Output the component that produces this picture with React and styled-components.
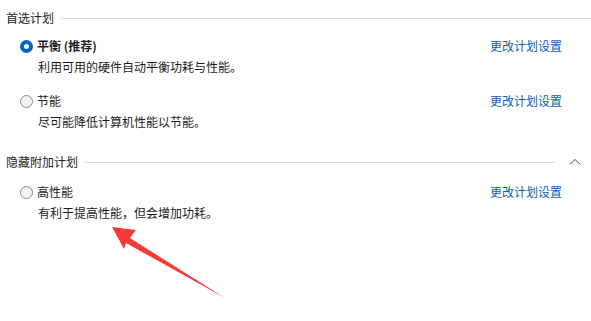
import React from 'react';
import styled, { createGlobalStyle } from 'styled-components';

const Global = createGlobalStyle`
  body {
    margin: 0;
    background: #fff;
    font-family: "Noto Sans CJK SC", "Microsoft YaHei", sans-serif;
    font-size: 12px;
    color: #1b1b1b;
  }
`;

const Page = styled.div`
  position: relative;
  width: 591px;
  height: 321px;
  padding-top: 8px;
  box-sizing: border-box;
  overflow: hidden;
`;

const SectionHead = styled.div`
  display: flex;
  align-items: center;
  height: 20px;
  line-height: 20px;
  padding-left: 6px;
  padding-right: ${p => (p.$collapsible ? '10px' : '0')};
  margin-top: ${p => p.$top || 0}px;
  gap: 6px;
  span { white-space: nowrap; }
  .line {
    flex: 1;
    height: 1px;
    background: #d9d9d9;
    margin-right: ${p => (p.$collapsible ? '8px' : '0')};
  }
`;

const Option = styled.div`
  margin-top: ${p => p.$top}px;
  padding-left: 20px;
  padding-right: 29px;
`;

const TitleRow = styled.div`
  display: flex;
  align-items: center;
  height: 20px;
  line-height: 20px;
`;

const Radio = styled.span`
  width: 13px;
  height: 13px;
  border-radius: 50%;
  box-sizing: border-box;
  margin-right: 4px;
  flex: none;
  ${p =>
    p.$checked
      ? `background: #fff; border: 4px solid #0064c2;`
      : `background: #f3f3f3; border: 1px solid #8a8a8a;`}
`;

const Title = styled.span`
  font-weight: ${p => (p.$bold ? 700 : 400)};
  flex: 1;
`;

const Link = styled.span`
  color: #0a5fb4;
`;

const Desc = styled.div`
  padding-left: 18px;
  height: 20px;
  line-height: 20px;
  margin-top: 1px;
`;

const Arrow = styled.svg`
  position: absolute;
  left: 0;
  top: 0;
`;

function PlanOption({ top, checked, bold, title, desc }) {
  return (
    <Option $top={top}>
      <TitleRow>
        <Radio $checked={checked} />
        <Title $bold={bold}>{title}</Title>
        <Link>更改计划设置</Link>
      </TitleRow>
      <Desc>{desc}</Desc>
    </Option>
  );
}

export default function App() {
  return (
    <>
      <Global />
      <Page>
        <SectionHead>
          <span>首选计划</span>
          <div className="line" />
        </SectionHead>
        <PlanOption top={8} checked bold title="平衡 (推荐)" desc="利用可用的硬件自动平衡功耗与性能。" />
        <PlanOption top={14} title="节能" desc="尽可能降低计算机性能以节能。" />
        <SectionHead $top={20} $collapsible>
          <span>隐藏附加计划</span>
          <div className="line" />
          <svg width="12" height="8" viewBox="0 0 12 8">
            <path d="M1 6 L6 1.5 L11 6" fill="none" stroke="#555" strokeWidth="1" />
          </svg>
        </SectionHead>
        <PlanOption top={10} title="高性能" desc="有利于提高性能，但会增加功耗。" />
        <Arrow width="591" height="321">
          <polygon
            points="112,227 136,230 130,238 225,298 126,243 124,249"
            fill="#f53a3a"
          />
        </Arrow>
      </Page>
    </>
  );
}
